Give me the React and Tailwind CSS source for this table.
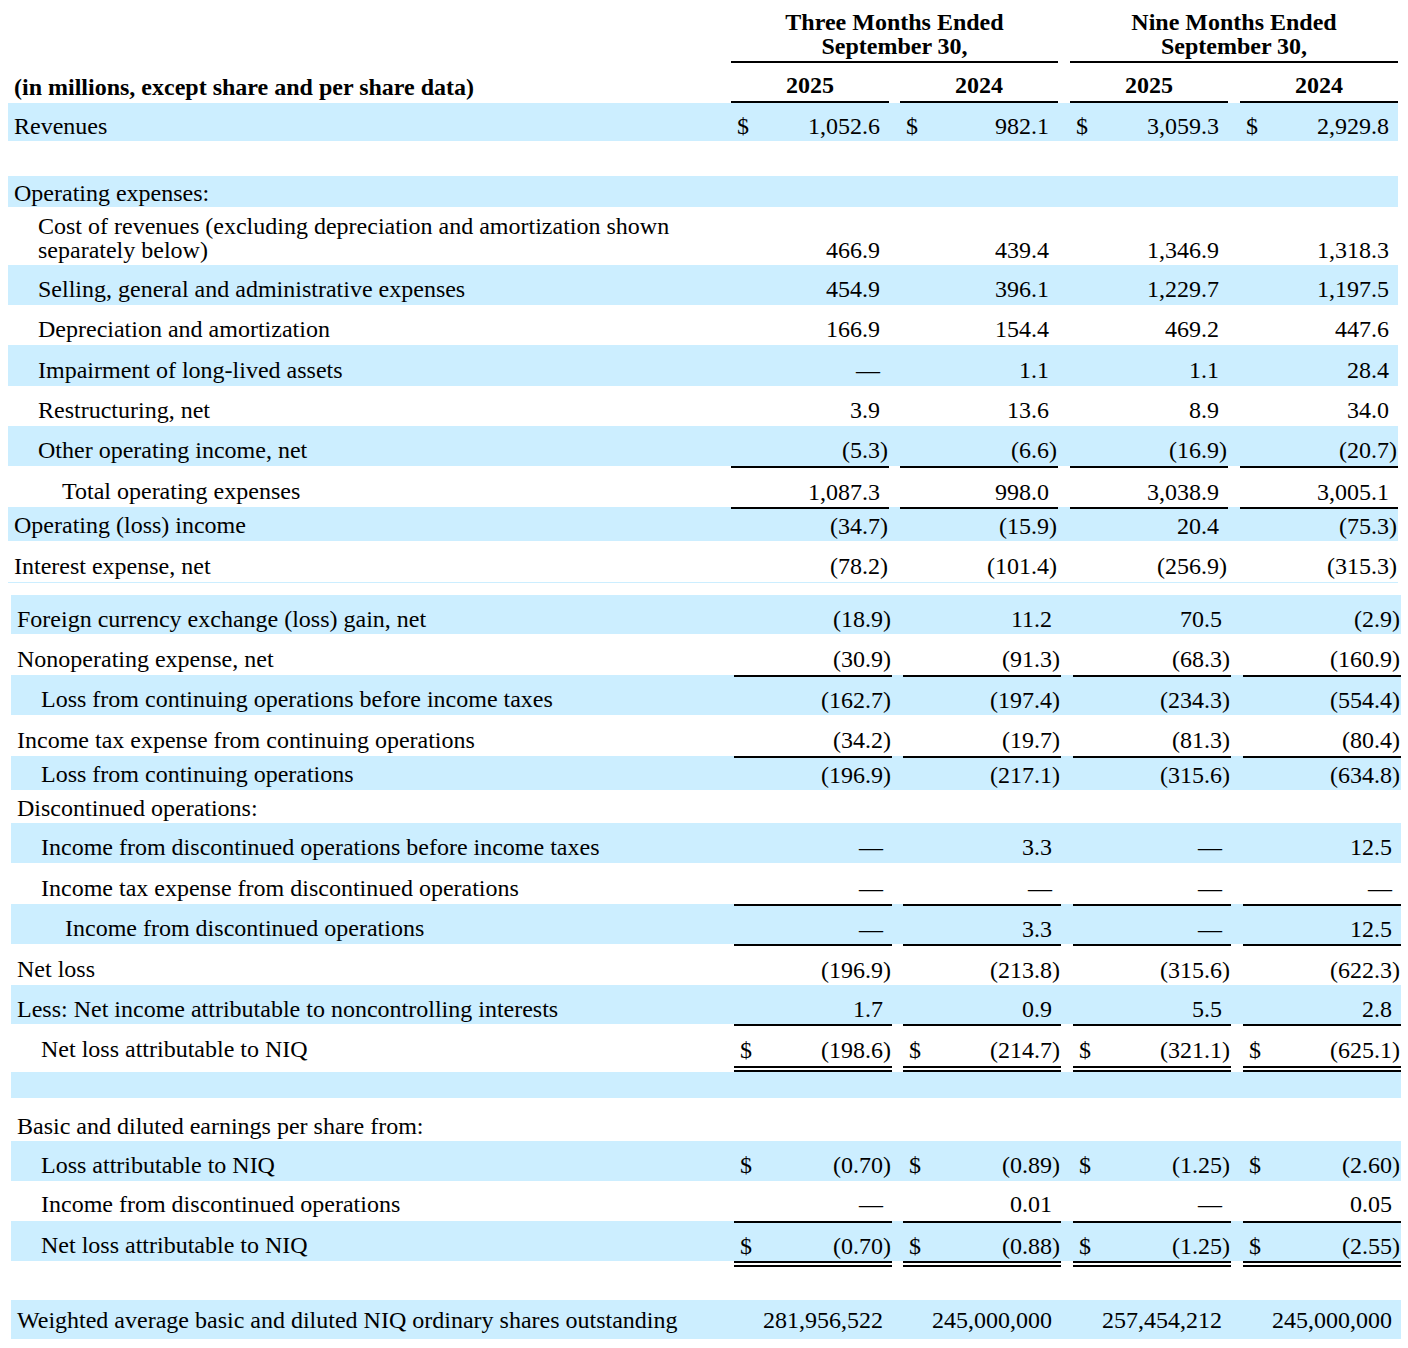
const gaps = ['', 'ml-[11px]', 'ml-[12px]', 'ml-[12px]']
const pads = ['pl-[6px]', 'pl-[30px]', 'pl-[54px]']

const D = '\u2014'

const topRows = [
  { label: 'Revenues', ind: 0, bg: true, h: 'h-[38px]', dollar: true, vals: ['1,052.6', '982.1', '3,059.3', '2,929.8'] },
  { blank: true, h: 'h-[35px]' },
  { label: 'Operating expenses:', ind: 0, bg: true, h: 'h-[31px]', pt: 'pt-[2px]' },
  {
    label: 'Cost of revenues (excluding depreciation and amortization shown separately below)',
    ind: 1, h: 'h-[58px]', align: 'items-end pb-[3px]', wrap: true,
    vals: ['466.9', '439.4', '1,346.9', '1,318.3'],
  },
  { label: 'Selling, general and administrative expenses', ind: 1, bg: true, h: 'h-[40px]', vals: ['454.9', '396.1', '1,229.7', '1,197.5'] },
  { label: 'Depreciation and amortization', ind: 1, h: 'h-[40px]', vals: ['166.9', '154.4', '469.2', '447.6'] },
  { label: 'Impairment of long-lived assets', ind: 1, bg: true, h: 'h-[41px]', vals: [D, '1.1', '1.1', '28.4'] },
  { label: 'Restructuring, net', ind: 1, h: 'h-[40px]', vals: ['3.9', '13.6', '8.9', '34.0'] },
  { label: 'Other operating income, net', ind: 1, bg: true, h: 'h-[40px]', vals: ['(5.3)', '(6.6)', '(16.9)', '(20.7)'] },
  { label: 'Total operating expenses', ind: 2, h: 'h-[41px]', rule: true, vals: ['1,087.3', '998.0', '3,038.9', '3,005.1'] },
  { label: 'Operating (loss) income', ind: 0, bg: true, h: 'h-[34px]', rule: true, pt: 'pt-[2px]', vals: ['(34.7)', '(15.9)', '20.4', '(75.3)'] },
  { label: 'Interest expense, net', ind: 0, h: 'h-[42px]', line: true, vals: ['(78.2)', '(101.4)', '(256.9)', '(315.3)'] },
]

const bottomRows = [
  { label: 'Foreign currency exchange (loss) gain, net', ind: 0, bg: true, h: 'h-[39px]', vals: ['(18.9)', '11.2', '70.5', '(2.9)'] },
  { label: 'Nonoperating expense, net', ind: 0, h: 'h-[41px]', vals: ['(30.9)', '(91.3)', '(68.3)', '(160.9)'] },
  { label: 'Loss from continuing operations before income taxes', ind: 1, bg: true, h: 'h-[40px]', rule: true, vals: ['(162.7)', '(197.4)', '(234.3)', '(554.4)'] },
  { label: 'Income tax expense from continuing operations', ind: 0, h: 'h-[41px]', vals: ['(34.2)', '(19.7)', '(81.3)', '(80.4)'] },
  { label: 'Loss from continuing operations', ind: 1, bg: true, h: 'h-[34px]', rule: true, pt: 'pt-[2px]', vals: ['(196.9)', '(217.1)', '(315.6)', '(634.8)'] },
  { label: 'Discontinued operations:', ind: 0, h: 'h-[33px]', pt: 'pt-[2px]' },
  { label: 'Income from discontinued operations before income taxes', ind: 1, bg: true, h: 'h-[40px]', vals: [D, '3.3', D, '12.5'] },
  { label: 'Income tax expense from discontinued operations', ind: 1, h: 'h-[41px]', vals: [D, D, D, D] },
  { label: 'Income from discontinued operations', ind: 2, bg: true, h: 'h-[40px]', rule: true, vals: [D, '3.3', D, '12.5'] },
  { label: 'Net loss', ind: 0, h: 'h-[41px]', rule: true, vals: ['(196.9)', '(213.8)', '(315.6)', '(622.3)'] },
  { label: 'Less: Net income attributable to noncontrolling interests', ind: 0, bg: true, h: 'h-[39px]', vals: ['1.7', '0.9', '5.5', '2.8'] },
  { label: 'Net loss attributable to NIQ', ind: 1, h: 'h-[42px]', rule: true, dollar: true, vals: ['(198.6)', '(214.7)', '(321.1)', '(625.1)'] },
  { double: true },
  { blank: true, bg: true, h: 'h-[26px]' },
  { label: 'Basic and diluted earnings per share from:', ind: 0, h: 'h-[43px]', pt: 'pt-[12px]' },
  { label: 'Loss attributable to NIQ', ind: 1, bg: true, h: 'h-[40px]', dollar: true, vals: ['(0.70)', '(0.89)', '(1.25)', '(2.60)'] },
  { label: 'Income from discontinued operations', ind: 1, h: 'h-[40px]', pt: 'pt-[6px]', vals: [D, '0.01', D, '0.05'] },
  { label: 'Net loss attributable to NIQ', ind: 1, bg: true, h: 'h-[40px]', rule: true, dollar: true, vals: ['(0.70)', '(0.88)', '(1.25)', '(2.55)'] },
  { double: true },
  { blank: true, h: 'h-[33px]' },
  {
    label: 'Weighted average basic and diluted NIQ ordinary shares outstanding',
    ind: 0, bg: true, h: 'h-[39px]', pt: 'pt-0',
    vals: ['281,956,522', '245,000,000', '257,454,212', '245,000,000'],
  },
]

function Row({ r }) {
  if (r.double) {
    return (
      <div className="flex h-[6px]">
        <div className="w-[723px] shrink-0" />
        {gaps.map((g, i) => (
          <div key={i} className={`${g} w-[158px] shrink-0 border-b-[6px] border-double border-black`} />
        ))}
      </div>
    )
  }
  if (r.blank) {
    return <div className={`${r.h} ${r.bg ? 'bg-[#cceeff]' : ''}`} />
  }
  const align = r.align || `items-center ${r.pt || 'pt-[8px]'}`
  return (
    <div className={`flex ${r.h} ${r.bg ? 'bg-[#cceeff]' : ''} ${r.line ? 'border-b border-[#cceeff]' : ''}`}>
      <div className={`w-[723px] shrink-0 flex ${align} ${pads[r.ind]}`}>
        <span className={r.wrap ? 'pr-[40px]' : 'whitespace-nowrap'}>{r.label}</span>
      </div>
      {r.vals &&
        r.vals.map((v, i) => (
          <div
            key={i}
            className={`${gaps[i]} w-[158px] shrink-0 flex ${align} ${r.rule ? 'border-t-2 border-black' : ''}`}
          >
            {r.dollar && <span className="pl-[6px]">$</span>}
            <span className={`ml-auto ${v.endsWith(')') ? 'pr-[1px]' : 'pr-[9px]'}`}>{v}</span>
          </div>
        ))}
    </div>
  )
}

export default function App() {
  return (
    <div className="w-[1408px] h-[1348px] bg-white text-black text-[24px] leading-6 font-['Liberation_Serif',serif]">
      <div className="ml-[8px] w-[1390px]">
        <div className="flex pt-[10px] font-bold">
          <div className="w-[723px] shrink-0" />
          <div className="w-[327px] shrink-0 text-center border-b-2 border-black pb-[3px]">
            <div>Three Months Ended</div>
            <div>September 30,</div>
          </div>
          <div className="ml-[12px] w-[328px] shrink-0 text-center border-b-2 border-black pb-[3px]">
            <div>Nine Months Ended</div>
            <div>September 30,</div>
          </div>
        </div>
        <div className="flex h-[40px] font-bold">
          <div className="w-[723px] shrink-0 flex items-end pb-[4px] pl-[6px]">
            (in millions, except share and per share data)
          </div>
          {['2025', '2024', '2025', '2024'].map((y, i) => (
            <div
              key={i}
              className={`${gaps[i]} w-[158px] shrink-0 flex items-end justify-center pb-[4px] border-b-2 border-black`}
            >
              {y}
            </div>
          ))}
        </div>
        {topRows.map((r, i) => (
          <Row key={i} r={r} />
        ))}
      </div>
      <div className="h-[12px]" />
      <div className="ml-[11px] w-[1390px]">
        {bottomRows.map((r, i) => (
          <Row key={i} r={r} />
        ))}
      </div>
    </div>
  )
}
